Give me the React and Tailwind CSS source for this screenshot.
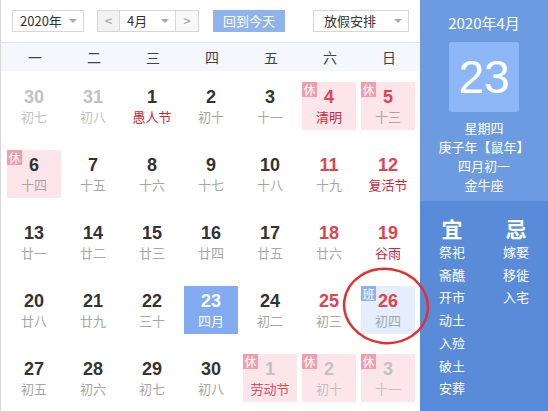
import React from 'react';

const weekdays = ['一', '二', '三', '四', '五', '六', '日'];

// tag: 'rest' (休) or 'work' (班)
const days = [
  { d: 30, l: '初七', out: true },
  { d: 31, l: '初八', out: true },
  { d: 1, l: '愚人节', fest: true },
  { d: 2, l: '初十' },
  { d: 3, l: '十一' },
  { d: 4, l: '清明', red: true, fest: true, tag: 'rest' },
  { d: 5, l: '十三', red: true, tag: 'rest' },
  { d: 6, l: '十四', tag: 'rest' },
  { d: 7, l: '十五' },
  { d: 8, l: '十六' },
  { d: 9, l: '十七' },
  { d: 10, l: '十八' },
  { d: 11, l: '十九', red: true },
  { d: 12, l: '复活节', red: true, fest: true },
  { d: 13, l: '廿一' },
  { d: 14, l: '廿二' },
  { d: 15, l: '廿三' },
  { d: 16, l: '廿四' },
  { d: 17, l: '廿五' },
  { d: 18, l: '廿六', red: true },
  { d: 19, l: '谷雨', red: true, fest: true },
  { d: 20, l: '廿八' },
  { d: 21, l: '廿九' },
  { d: 22, l: '三十' },
  { d: 23, l: '四月', today: true },
  { d: 24, l: '初二' },
  { d: 25, l: '初三', red: true },
  { d: 26, l: '初四', red: true, tag: 'work' },
  { d: 27, l: '初五' },
  { d: 28, l: '初六' },
  { d: 29, l: '初七' },
  { d: 30, l: '初八' },
  { d: 1, l: '劳动节', out: true, fest: true, tag: 'rest' },
  { d: 2, l: '初十', out: true, tag: 'rest' },
  { d: 3, l: '十一', out: true, tag: 'rest' },
];

const good = ['祭祀', '斋醮', '开市', '动土', '入殓', '破土', '安葬'];
const bad = ['嫁娶', '移徙', '入宅'];

const Arrow = () => (
  <span className="ml-auto mr-[6px] h-0 w-0 border-x-[4px] border-t-[4px] border-x-transparent border-t-[#aaa]" />
);

const DayCell = ({ day }) => {
  let bg = '';
  if (day.today) bg = 'bg-[#82abf1]';
  else if (day.tag === 'rest') bg = 'bg-[#fde6eb]';
  else if (day.tag === 'work') bg = 'bg-[#e5eefd]';

  let numColor = 'text-[#333]';
  if (day.today) numColor = 'text-white';
  else if (day.out) numColor = 'text-[#c2c2c2]';
  else if (day.red) numColor = 'text-[#e0424f]';

  let lunarColor = 'text-[#a6a6a6]';
  if (day.today) lunarColor = 'text-white';
  else if (day.fest) lunarColor = day.out ? 'text-[#d6505e]' : 'text-[#c8283a]';
  else if (day.out) lunarColor = 'text-[#c2c2c2]';

  return (
    <div className={`relative flex h-[48px] w-[54px] flex-col items-center pt-[4px] ${bg}`}>
      {day.tag && (
        <span
          className={`absolute left-0 top-0 flex h-[15px] w-[15px] items-center justify-center text-[12px] leading-none text-white ${
            day.tag === 'rest' ? 'bg-[#f29cad]' : 'bg-[#8fb2ee]'
          }`}
        >
          {day.tag === 'rest' ? '休' : '班'}
        </span>
      )}
      <span className={`font-['Liberation_Sans',sans-serif] text-[18px] font-bold leading-[22px] ${numColor}`}>{day.d}</span>
      <span className={`text-[13px] leading-[18px] ${lunarColor}`}>{day.l}</span>
    </div>
  );
};

export default function App() {
  return (
    <div className="relative flex h-[411px] w-[548px] overflow-hidden bg-white font-['Noto_Sans_CJK_SC',sans-serif] text-[#333]">
      {/* left: calendar */}
      <div className="flex w-[420px] flex-col border-l border-[#d9d9d9]">
        <div className="flex h-[43px] items-center border-b border-[#e3e3e3] pl-[11px] text-[13px]">
          <div className="flex h-[22px] w-[72px] items-center border border-[#d6d6d6] pl-[7px]">
            <span>2020年</span>
            <Arrow />
          </div>
          <div className="ml-[13px] flex h-[22px] w-[102px] border border-[#d6d6d6]">
            <span className="flex w-[22px] items-center justify-center border-r border-[#d6d6d6] bg-[#f2f2f2] text-[#999]">&lt;</span>
            <span className="flex flex-1 items-center border-r border-[#d6d6d6] pl-[7px]">
              4月
              <Arrow />
            </span>
            <span className="flex w-[22px] items-center justify-center bg-[#f8f8f8] text-[#999]">&gt;</span>
          </div>
          <div className="ml-[14px] flex h-[22px] w-[72px] items-center justify-center bg-[#8fb4ec] text-white">回到今天</div>
          <div className="ml-[28px] flex h-[22px] w-[96px] items-center border border-[#d6d6d6] pl-[10px]">
            <span>放假安排</span>
            <Arrow />
          </div>
        </div>

        <div className="grid h-[28px] grid-cols-[repeat(7,54px)] gap-x-[5px] bg-[#f4f7fb] px-[7px] text-[14px] leading-[28px] text-[#444]">
          {weekdays.map((w) => (
            <span key={w} className="text-center">{w}</span>
          ))}
        </div>

        <div className="grid grid-cols-[repeat(7,54px)] gap-x-[5px] gap-y-[20px] px-[6px] pt-[11px]">
          {days.map((day, i) => (
            <DayCell key={i} day={day} />
          ))}
        </div>
      </div>

      {/* right: detail */}
      <div className="flex w-[128px] flex-col text-white">
        <div className="flex h-[201px] flex-col items-center bg-[#6d9be2] pt-[12px]">
          <div className="text-[15px] leading-[22px]">2020年4月</div>
          <div className="mt-[8px] flex h-[70px] w-[70px] items-center justify-center rounded-[3px] bg-[#8db7f7] font-['Liberation_Sans',sans-serif] text-[46px] leading-none">
            23
          </div>
          <div className="mt-[6px] flex flex-col items-center text-[13px] leading-[19px]">
            <span>星期四</span>
            <span>庚子年【鼠年】</span>
            <span>四月初一</span>
            <span>金牛座</span>
          </div>
        </div>
        <div className="flex flex-1 justify-center gap-[38px] bg-[#5a8bd9] pt-[14px]">
          <div className="flex flex-col items-center">
            <span className="text-[21px] font-bold leading-[26px]">宜</span>
            <div className="flex flex-col text-[13px] leading-[22.7px]">
              {good.map((g) => (
                <span key={g}>{g}</span>
              ))}
            </div>
          </div>
          <div className="flex flex-col items-center">
            <span className="text-[21px] font-bold leading-[26px]">忌</span>
            <div className="flex flex-col text-[13px] leading-[22.7px]">
              {bad.map((b) => (
                <span key={b}>{b}</span>
              ))}
            </div>
          </div>
        </div>
      </div>

      {/* red annotation circle */}
      <svg className="pointer-events-none absolute left-[340px] top-[266px]" width="94" height="84" viewBox="0 0 94 84">
        <ellipse cx="46" cy="40" rx="42" ry="37" fill="none" stroke="#e0322f" strokeWidth="2.5" transform="rotate(8 46 40)" />
      </svg>
    </div>
  );
}
